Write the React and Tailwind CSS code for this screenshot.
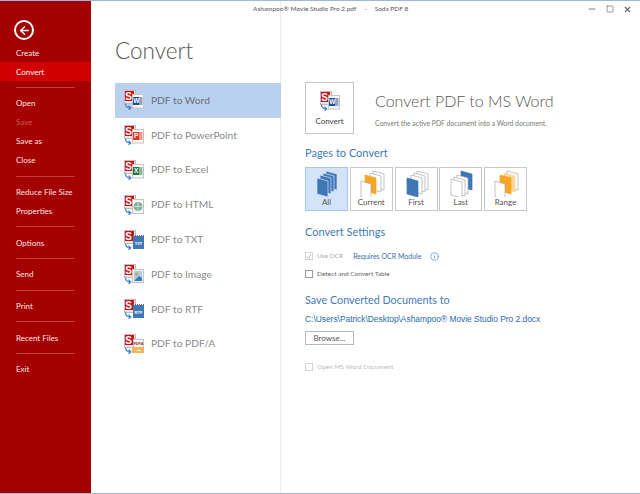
import { ArrowLeft, Info, Minus, Square, X } from "lucide-react";

const sideGroups = [
  ["Create", "Convert"],
  ["Open", "Save", "Save as", "Close"],
  ["Reduce File Size", "Properties"],
  ["Options"],
  ["Send"],
  ["Print"],
  ["Recent Files"],
  ["Exit"],
];

const formats = [
  { label: "PDF to Word", type: "word" },
  { label: "PDF to PowerPoint", type: "ppt" },
  { label: "PDF to Excel", type: "excel" },
  { label: "PDF to HTML", type: "html" },
  { label: "PDF to TXT", type: "txt" },
  { label: "PDF to Image", type: "image" },
  { label: "PDF to RTF", type: "rtf" },
  { label: "PDF to PDF/A", type: "pdfa" },
];

function Badge({ type }) {
  if (type === "word" || type === "ppt" || type === "excel") {
    const color = { word: "#1f4f9c", ppt: "#d8391c", excel: "#1f7a42" }[type];
    const letter = { word: "W", ppt: "P", excel: "X" }[type];
    return (
      <g>
        <rect x="8.5" y="4.5" width="11" height="13.5" fill="#fafafa" stroke="#c4c4c4" />
        <rect x="9" y="7" width="6.5" height="8" fill={color} />
        <text x="12.2" y="13.4" fontSize="6.5" fontWeight="700" textAnchor="middle" fill="#fff" fontFamily="Liberation Sans">{letter}</text>
        <path d="M16 8h2.5M16 10h2.5M16 12h2.5M16 14h2.5" stroke={color} />
      </g>
    );
  }
  if (type === "html") {
    return (
      <g>
        <rect x="8.5" y="4.5" width="11" height="14" fill="#f5f5f5" stroke="#c4c4c4" />
        <circle cx="14" cy="11.5" r="4.5" fill="#7fb09b" />
        <path d="M14 7v9M9.5 11.5h9" stroke="#d5e6de" strokeWidth="0.8" />
      </g>
    );
  }
  if (type === "txt" || type === "rtf") {
    return (
      <g>
        <rect x="9" y="6" width="11" height="13" fill="#4177b5" />
        <path d="M9.5 5v2M11.5 5v2M13.5 5v2M15.5 5v2M17.5 5v2M19.5 5v2" stroke="#4177b5" />
        <text x="14.5" y="14.5" fontSize="4" fontWeight="700" textAnchor="middle" fill="#fff" fontFamily="Liberation Sans">{type.toUpperCase()}</text>
      </g>
    );
  }
  if (type === "image") {
    return (
      <g>
        <rect x="8.5" y="5.5" width="11" height="13" fill="#eef2f6" stroke="#c4c4c4" />
        <rect x="10" y="7" width="8" height="10" fill="#a8cdea" />
        <circle cx="12.5" cy="10" r="1.5" fill="#f29a1f" />
        <path d="M10 17l5-5 3 2v3z" fill="#3f76b5" />
      </g>
    );
  }
  return (
    <g>
      <rect x="9.5" y="5.5" width="10" height="8" fill="#f4f4f4" stroke="#c4c4c4" />
      <text x="14.5" y="11" fontSize="3.2" fontWeight="700" textAnchor="middle" fill="#7a2a2a" fontFamily="Liberation Sans">PDF/A</text>
      <rect x="8" y="13" width="12" height="6" fill="#f5b55a" />
      <path d="M13 16.5h4" stroke="#fff" />
    </g>
  );
}

function FormatIcon({ type }) {
  return (
    <svg width="20" height="20" viewBox="0 0 20 20" className="shrink-0">
      <rect x="0.5" y="0.5" width="11" height="13" fill="#e8e8e8" stroke="#bdbdbd" />
      <rect x="1" y="1" width="9" height="10" fill="#cf0f14" />
      <text x="4.6" y="9.6" fontSize="10" fontWeight="700" textAnchor="middle" fill="#fff" fontFamily="Liberation Sans">S</text>
      <path d="M1.5 13.5c0 3 2 4.5 5 4.5M4.5 15.8l2.3 2.2-2.3 1.7" fill="none" stroke="#3d82c8" strokeWidth="1.2" />
      <Badge type={type} />
    </svg>
  );
}

function PageIcon({ sheets }) {
  return (
    <svg width="41" height="29" viewBox="0 0 41 29">
      {sheets.map((s, i) => (
        <path
          key={i}
          d={`M${s.x} ${s.y}l${s.w || 11} 3v16l-${s.w || 11} -3z`}
          fill={s.fill || "#fff"}
          stroke={s.stroke || "#aaaaaa"}
          strokeWidth="0.7"
        />
      ))}
    </svg>
  );
}

const blue = "#3f76b5";
const orange = "#f5a623";

const pageOptions = [
  {
    label: "All",
    active: true,
    sheets: [
      { x: 20, y: 3, fill: blue, stroke: "#d3e4f8" },
      { x: 17, y: 5, fill: blue, stroke: "#d3e4f8" },
      { x: 14, y: 7, fill: blue, stroke: "#d3e4f8" },
      { x: 11, y: 10, fill: blue, stroke: "#d3e4f8" },
    ],
  },
  {
    label: "Current",
    sheets: [
      { x: 22, y: 3 },
      { x: 19, y: 5 },
      { x: 14, y: 7, fill: orange, stroke: orange },
      { x: 10, y: 13, w: 10 },
    ],
  },
  {
    label: "First",
    sheets: [
      { x: 21, y: 3 },
      { x: 18, y: 5 },
      { x: 15, y: 7 },
      { x: 11, y: 10, fill: blue, stroke: blue },
    ],
  },
  {
    label: "Last",
    sheets: [
      { x: 21, y: 3, fill: blue, stroke: blue },
      { x: 17, y: 7 },
      { x: 14, y: 9 },
      { x: 11, y: 11 },
    ],
  },
  {
    label: "Range",
    sheets: [
      { x: 22, y: 3 },
      { x: 19, y: 5, fill: "#f8d49a", stroke: "#f8d49a" },
      { x: 15, y: 7, fill: orange, stroke: orange },
      { x: 10, y: 13, w: 10 },
    ],
  },
];

function Checkbox({ checked, dim }) {
  return (
    <span className={`flex h-[8px] w-[8px] items-center justify-center border ${dim ? "border-[#d4d4d4]" : "border-[#9a9a9a]"} bg-white`}>
      {checked && (
        <svg width="7" height="7" viewBox="0 0 8 8">
          <path d="M1 4l2 2.5L7 1" fill="none" stroke="#a0a0a0" strokeWidth="1" />
        </svg>
      )}
    </span>
  );
}

export default function App() {
  return (
    <div className="flex h-[494px] w-[640px] overflow-hidden border-y border-[#9db8db] bg-white font-['Lato',sans-serif]">
      {/* sidebar */}
      <aside className="w-[91px] shrink-0 bg-[#a50000] text-[8px] text-[#f5e6e6]">
        <div className="flex h-[42px] items-end pb-[3px] pl-[14px]">
          <div className="flex h-[20px] w-[20px] items-center justify-center rounded-full border-2 border-white">
            <ArrowLeft size={13} strokeWidth={2.5} className="text-white" />
          </div>
        </div>
        {sideGroups.map((group, i) => (
          <div key={i}>
            {i > 0 && <div className="mx-[16px] my-[5.85px] h-px bg-[#bd4040]" />}
            {group.map((item) => (
              <div
                key={item}
                className={`flex h-[19px] items-center pl-[16px] ${
                  item === "Convert" ? "bg-[#d10000] text-white" : ""
                } ${item === "Save" ? "text-[#cc5a5a]" : ""}`}
              >
                {item}
              </div>
            ))}
          </div>
        ))}
      </aside>

      {/* format list */}
      <section className="flex w-[190px] shrink-0 flex-col border-r border-[#ececec] pl-[24px]">
        <h1 className="mt-[30px] h-[52px] text-[22.5px] leading-[40px] font-light text-[#555]">Convert</h1>
        <div className="-mr-px w-[166px]">
          {formats.map((f, i) => (
            <div
              key={f.label}
              className={`flex h-[34.8px] items-center gap-[7px] pl-[9px] text-[10.2px] ${
                i === 0 ? "bg-[#b9d0ef] text-[#6a6f78]" : "text-[#8a8a8a]"
              }`}
            >
              <FormatIcon type={f.type} />
              <span>{f.label}</span>
            </div>
          ))}
        </div>
      </section>

      {/* right panel */}
      <main className="relative flex-1 pl-[24px]">
        <div className="absolute top-[3px] left-[-28px] flex gap-[8px] text-[6.5px] text-[#555]">
          <span>Ashampoo® Movie Studio Pro 2.pdf</span>
          <span>-</span>
          <span>Soda PDF 8</span>
        </div>
        <div className="absolute top-[3px] right-[8px] flex items-center gap-[9px] text-[#666]">
          <Minus size={10} />
          <Square size={8} />
          <X size={9} strokeWidth={3} />
        </div>

        <div className="mt-[81px] flex items-start">
          <div className="flex h-[52px] w-[49px] flex-col items-center justify-between border border-[#c4c4c4] pt-[8px] pb-[6px] text-[8px] text-[#444]">
            <FormatIcon type="word" />
            <span>Convert</span>
          </div>
          <div className="ml-[21px]">
            <div className="mt-[5px] text-[16px] leading-[28px] font-light text-[#555]">Convert PDF to MS Word</div>
            <div className="mt-[3px] text-[6.8px] leading-[11px] text-[#777]">Convert the active PDF document into a Word document.</div>
          </div>
        </div>

        <h2 className="mt-[11px] text-[11px] leading-[16px] text-[#3f7ab8]">Pages to Convert</h2>
        <div className="mt-[6px] flex gap-[1.75px]">
          {pageOptions.map((p) => (
            <div
              key={p.label}
              className={`flex h-[44px] w-[43px] flex-col items-center border text-[8px] leading-[10px] text-[#555] ${
                p.active ? "border-[#a9c6e8] bg-[#d3e4f8]" : "border-[#c8c8c8] bg-white"
              }`}
            >
              <PageIcon sheets={p.sheets} />
              <span>{p.label}</span>
            </div>
          ))}
        </div>

        <h2 className="mt-[13px] text-[11px] leading-[16px] text-[#3f7ab8]">Convert Settings</h2>
        <div className="mt-[9px] flex h-[14px] items-center gap-[4px] text-[6.5px] text-[#aaa]">
          <Checkbox checked dim />
          <span>Use OCR</span>
          <span className="ml-[6px] text-[7px] text-[#3a70ad]">Requires OCR Module</span>
          <Info size={9} className="ml-[5px] text-[#5b94d6]" />
        </div>
        <div className="mt-[4px] flex h-[14px] items-center gap-[4px] text-[6.5px] text-[#666]">
          <Checkbox />
          <span>Detect and Convert Table</span>
        </div>

        <h2 className="mt-[11px] text-[10.8px] leading-[16px] text-[#3f7ab8]">Save Converted Documents to</h2>
        <div className="mt-[4px] font-['Liberation_Sans',sans-serif] text-[8.4px] leading-[14px] whitespace-nowrap text-[#2a6aa8]">
          C:\Users\Patrick\Desktop\Ashampoo® Movie Studio Pro 2.docx
        </div>
        <div className="mt-[5px] flex h-[14px] w-[49px] items-center justify-center border border-[#b8b8b8] text-[8px] text-[#555]">
          Browse...
        </div>
        <div className="mt-[15px] flex h-[14px] items-center gap-[4px] text-[6.5px] text-[#bbb]">
          <Checkbox dim />
          <span>Open MS Word Document</span>
        </div>
      </main>
    </div>
  );
}
